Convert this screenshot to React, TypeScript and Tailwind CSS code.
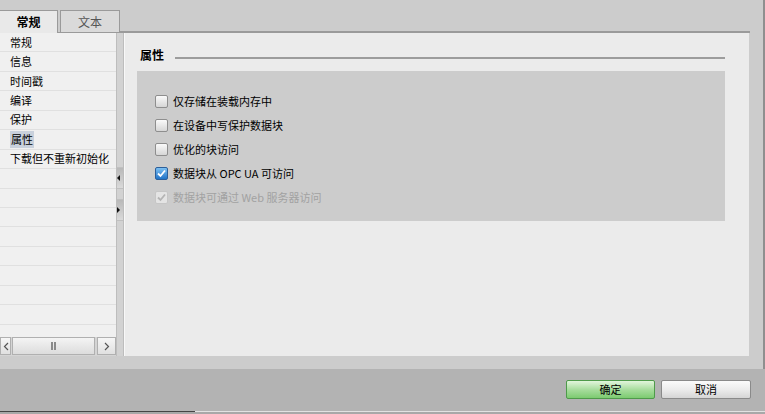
import React from "react";

const FONT = { fontFamily: '"Noto Sans CJK SC", "Noto Sans", sans-serif' };

function Checkbox({ checked, disabled }: { checked?: boolean; disabled?: boolean }) {
  if (disabled) {
    return (
      <div className="w-[13px] h-[13px] rounded-[2px] border border-[#c6c6c6] bg-[#e4e4e4] flex items-center justify-center">
        <svg width="11" height="11" viewBox="0 0 11 11">
          <path d="M2 5.5 L4.5 8 L9 2.5" fill="none" stroke="#b4b4b4" strokeWidth="1.8" />
        </svg>
      </div>
    );
  }
  if (checked) {
    return (
      <div className="w-[13px] h-[13px] rounded-[2px] border border-[#2c5f9a] bg-gradient-to-b from-[#7cc0f2] to-[#1e74c8] flex items-center justify-center">
        <svg width="11" height="11" viewBox="0 0 11 11">
          <path d="M2 5.5 L4.5 8 L9 2.5" fill="none" stroke="#ffffff" strokeWidth="1.8" />
        </svg>
      </div>
    );
  }
  return (
    <div className="w-[13px] h-[13px] rounded-[2px] border border-[#8e8e8e] bg-gradient-to-b from-[#fafafa] to-[#d6d6d6]" />
  );
}

const listItems = ["常规", "信息", "时间戳", "编译", "保护", "属性", "下载但不重新初始化"];

const options = [
  { label: "仅存储在装载内存中" },
  { label: "在设备中写保护数据块" },
  { label: "优化的块访问" },
  { label: "数据块从 OPC UA 可访问", checked: true },
  { label: "数据块可通过 Web 服务器访问", checked: true, disabled: true },
];

export default function App() {
  const rows = Array.from({ length: 16 }, (_, i) => listItems[i] ?? "");
  return (
    <div className="w-[765px] h-[414px] bg-[#cccccc] flex flex-col overflow-hidden" style={FONT}>
      {/* upper part */}
      <div className="h-[369px] flex flex-col border-r-2 border-[#8f8f8f]">
        {/* tabs */}
        <div className="h-[33px] pt-[10px] flex items-end">
          <div className="w-[58px] h-[23px] bg-[#e9e9e9] border-t border-r border-[#9a9a9a] flex items-center justify-center text-[12px] font-bold text-black">
            常规
          </div>
          <div className="w-[2px] h-[23px] border-b border-[#9a9a9a]" />
          <div className="w-[60px] h-[23px] bg-[#dadada] border border-[#9a9a9a] flex items-center justify-center text-[12px] text-[#555]">
            文本
          </div>
          <div className="w-[630px] h-[23px] border-b-2 border-[#9a9a9a]" />
        </div>
        {/* content */}
        <div className="h-[323px] flex">
          {/* list */}
          <div className="w-[116px] flex flex-col bg-[#f0f0f0]">
            <div className="flex-1 overflow-hidden flex flex-col">
              {rows.map((t, i) => (
                <div
                  key={i}
                  className="h-[19.45px] shrink-0 border-b border-[#e0e0e0] flex items-center pl-[10px] text-[11px] text-black leading-none"
                >
                  {t === "属性" ? (
                    <span className="bg-[#c9d1dc] px-[1px] h-[17px] flex items-center">{t}</span>
                  ) : (
                    <span>{t}</span>
                  )}
                </div>
              ))}
            </div>
            {/* horizontal scrollbar */}
            <div className="h-[19px] flex items-stretch bg-[#d4d4d4] pb-[1px]">
              <div className="w-[11px] border border-[#b0b0b0] bg-gradient-to-b from-[#f6f6f6] to-[#e0e0e0] flex items-center justify-center">
                <svg width="6" height="9" viewBox="0 0 6 9">
                  <path d="M5 1 L1.5 4.5 L5 8" fill="none" stroke="#555" strokeWidth="1.2" />
                </svg>
              </div>
              <div className="w-[1px]" />
              <div className="w-[83px] border border-[#b0b0b0] bg-gradient-to-b from-[#f4f4f4] to-[#dcdcdc] flex items-center justify-center">
                <div className="flex gap-[1px]">
                  <div className="w-[2px] h-[8px] bg-[#8a8a8a]" />
                  <div className="w-[2px] h-[8px] bg-[#8a8a8a]" />
                </div>
              </div>
              <div className="w-[2px]" />
              <div className="w-[19px] border border-[#b0b0b0] bg-gradient-to-b from-[#f6f6f6] to-[#e0e0e0] flex items-center justify-center">
                <svg width="6" height="9" viewBox="0 0 6 9">
                  <path d="M1 1 L4.5 4.5 L1 8" fill="none" stroke="#555" strokeWidth="1.2" />
                </svg>
              </div>
            </div>
          </div>
          {/* splitter */}
          <div className="w-[8px] bg-[#d2d2d2] border-l border-r border-[#bdbdbd] flex flex-col">
            <div className="h-[134px]" />
            <div className="h-[22px] bg-gradient-to-b from-[#b8b8b8] to-[#dadada] border-y border-[#c0c0c0] flex items-center">
              <svg width="4" height="6" viewBox="0 0 4 6">
                <path d="M3 0 L0 3 L3 6 Z" fill="#111" />
              </svg>
            </div>
            <div className="h-[10px]" />
            <div className="h-[22px] bg-gradient-to-b from-[#b8b8b8] to-[#dadada] border-y border-[#c0c0c0] flex items-center">
              <svg width="4" height="6" viewBox="0 0 4 6">
                <path d="M0 0 L3 3 L0 6 Z" fill="#111" />
              </svg>
            </div>
          </div>
          {/* right panel */}
          <div className="w-[625px] bg-[#ebebeb] border-l border-[#f8f8f8] flex flex-col pl-[12px] pr-[24px]">
            <div className="h-[28px] flex items-end">
              <div className="flex items-center w-full">
                <span className="text-[12px] font-bold text-black leading-none pl-[3px]">属性</span>
                <div className="flex-1 ml-[11px] h-[2px] bg-[#9c9c9c] mt-[5px]" />
              </div>
            </div>
            <div className="mt-[10px] h-[150px] bg-[#cccccc] pl-[18px] pt-[24px] flex flex-col gap-[11px]">
              {options.map((o, i) => (
                <div key={i} className="h-[13px] flex items-center gap-[5px]">
                  <Checkbox checked={o.checked} disabled={o.disabled} />
                  <span
                    className={
                      "text-[11px] leading-none " + (o.disabled ? "text-[#a2a2a2]" : "text-black")
                    }
                  >
                    {o.label}
                  </span>
                </div>
              ))}
            </div>
          </div>
        </div>
        {/* band */}
        <div className="h-[13px]" />
      </div>
      {/* bottom */}
      <div className="h-[42px] bg-[#b3b3b3] flex justify-end items-start pt-[11px] pr-[14px] gap-[6px]">
        <div className="w-[89px] h-[19px] rounded-[2px] border border-[#4e9a4a] bg-gradient-to-b from-[#e2f5dc] via-[#a8dd9e] to-[#7ccb70] flex items-center justify-center text-[11px] text-black">
          确定
        </div>
        <div className="w-[90px] h-[19px] rounded-[2px] border border-[#8a8a8a] bg-gradient-to-b from-[#fbfbfb] via-[#ececec] to-[#d6d6d6] flex items-center justify-center text-[11px] text-black">
          取消
        </div>
      </div>
      <div className="h-[1px] flex">
        <div className="w-[195px] bg-[#454545]" />
        <div className="flex-1 bg-[#e2e2e2]" />
      </div>
      <div className="flex-1 bg-[#a8a8a8]" />
    </div>
  );
}
